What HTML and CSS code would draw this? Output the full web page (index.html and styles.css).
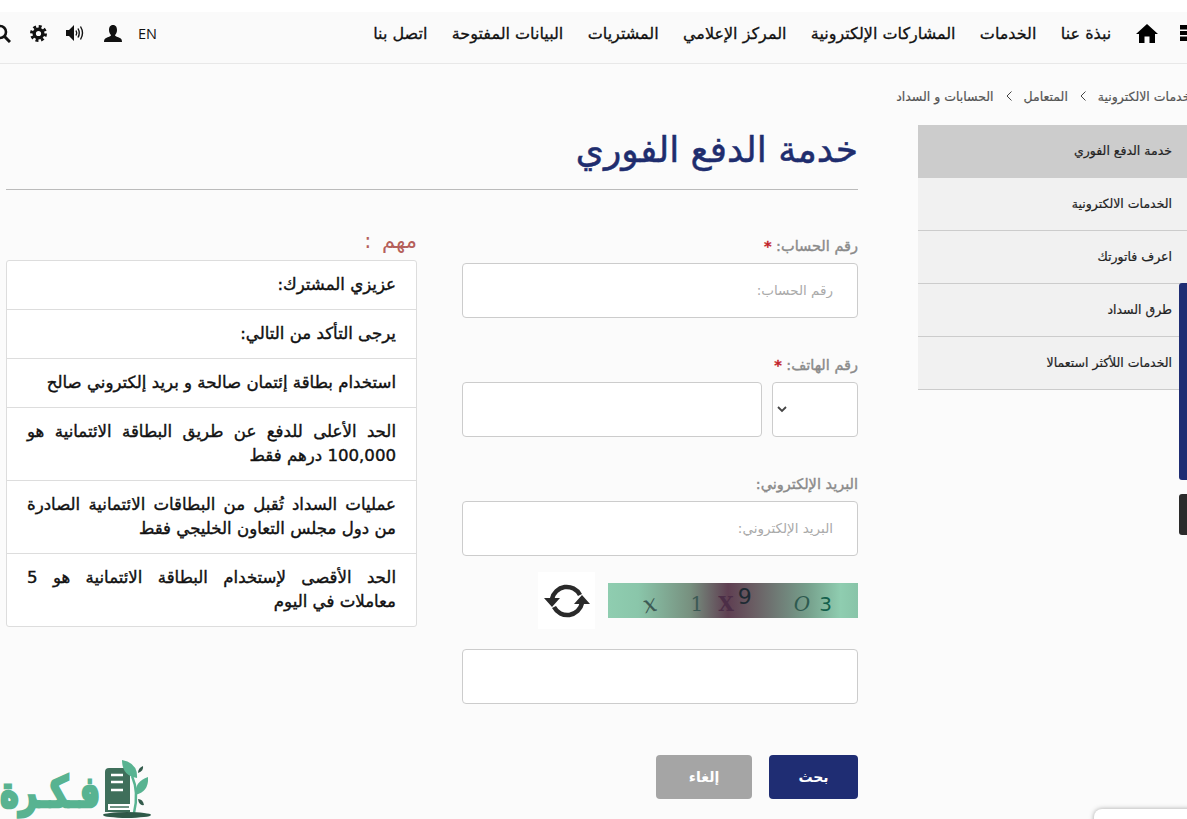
FILE: index.html
```html
<!DOCTYPE html>
<html lang="ar" dir="rtl">
<head>
  <meta charset="UTF-8">
  <meta name="viewport" content="width=device-width, initial-scale=1.0">
  <title>خدمة الدفع الفوري</title>
  <link rel="stylesheet" href="styles.css">
</head>
<body>

<!-- Top Bar -->
<header class="top-bar">
  <nav class="main-nav">
    <svg class="apps-icon" width="7" height="16" viewBox="0 0 7 16"><rect width="7" height="4.500"/><rect y="6" width="7" height="4"/><rect y="11.500" width="7" height="4.500"/></svg>
    <svg class="home-icon" width="22" height="19" viewBox="0 0 22 19"><path d="M11 0 L22 10 L19 10 L19 19 L13.500 19 L13.500 12.500 L8.500 12.500 L8.500 19 L3 19 L3 10 L0 10 Z"/></svg>
    <a>نبذة عنا</a>
    <a>الخدمات</a>
    <a>المشاركات الإلكترونية</a>
    <a>المركز الإعلامي</a>
    <a>المشتريات</a>
    <a>البيانات المفتوحة</a>
    <a>اتصل بنا</a>
  </nav>
  <div class="tools" dir="ltr">
    <svg width="19" height="19" viewBox="0 0 19 19"><circle cx="8" cy="8" r="6" fill="none" stroke="#111" stroke-width="2.600"/><path d="M12.500 12.500 L18 18" stroke="#111" stroke-width="3"/></svg>
    <svg width="17" height="17" viewBox="0 0 17 17"><circle cx="8.500" cy="8.500" r="4.300" fill="none" stroke="#111" stroke-width="3.400"/><circle cx="8.500" cy="8.500" r="7" fill="none" stroke="#111" stroke-width="3" stroke-dasharray="2.900 2.600"/></svg>
    <svg width="19" height="18" viewBox="0 0 19 18"><path d="M0 6 L3 6 L8 1 L8 17 L3 12 L0 12 Z"/><g fill="none" stroke="#111" stroke-width="1.400"><path d="M10 6.500 Q11.500 9 10 11.500"/><path d="M12 4.500 Q14.500 9 12 13.500"/><path d="M14.500 2.500 Q18.500 9 14.500 15.500"/></g></svg>
    <svg width="18" height="17" viewBox="0 0 18 17"><path d="M9 0 C12 0 13 2.500 13 5 C13 7.500 12 9 11 10 C11 11.500 14 12 16 13 C17.500 13.700 18 15 18 17 L0 17 C0 15 .5 13.700 2 13 C4 12 7 11.500 7 10 C6 9 5 7.500 5 5 C5 2.500 6 0 9 0 Z"/></svg>
    <span class="lang">EN</span>
  </div>
</header>

<!-- Breadcrumb -->
<div class="breadcrumb">
  <span>الخدمات الالكترونية</span>
  <svg width="6" height="10" viewBox="0 0 6 10"><path d="M5.500 .5 L1 5 L5.500 9.500" fill="none" stroke="#444"/></svg>
  <span>المتعامل</span>
  <svg width="6" height="10" viewBox="0 0 6 10"><path d="M5.500 .5 L1 5 L5.500 9.500" fill="none" stroke="#444"/></svg>
  <span>الحسابات و السداد</span>
</div>

<div class="page">
  <!-- Side Menu -->
  <aside class="side-menu">
    <a class="active">خدمة الدفع الفوري</a>
    <a>الخدمات الالكترونية</a>
    <a>اعرف فاتورتك</a>
    <a>طرق السداد</a>
    <a>الخدمات اللأكثر استعمالا</a>
  </aside>

  <main class="content">
    <h1 class="page-title">خدمة الدفع الفوري</h1>

    <div class="columns">
      <!-- Payment Form -->
      <form class="pay-form">
        <div class="field">
          <label>رقم الحساب: <b>*</b></label>
          <input type="text" placeholder="رقم الحساب:">
        </div>
        <div class="field">
          <label>رقم الهاتف: <b>*</b></label>
          <div class="phone-row">
            <div class="code-select">
              <svg width="10" height="7" viewBox="0 0 10 7"><path d="M1 1 L5 5 L9 1" fill="none" stroke="#444" stroke-width="1.800"/></svg>
            </div>
            <input type="text">
          </div>
        </div>
        <div class="field">
          <label>البريد الإلكتروني:</label>
          <input type="text" placeholder="البريد الإلكتروني:">
        </div>
        <div class="captcha-row">
          <div class="captcha" dir="ltr">
            <i class="c1">x</i><i class="c2">1</i><i class="c3">X</i><i class="c4">9</i><i class="c5">O</i><i class="c6">3</i>
          </div>
          <div class="refresh">
            <svg width="46" height="38" viewBox="0 0 46 38">
              <path d="M8 17 A15 15 0 0 1 36 13" fill="none" stroke="#2a2a2a" stroke-width="4.500"/>
              <path d="M38 21 A15 15 0 0 1 10 25" fill="none" stroke="#2a2a2a" stroke-width="4.500"/>
              <path d="M0 16 L16 16 L8 25 Z M46 22 L30 22 L38 13 Z" fill="#2a2a2a"/>
            </svg>
          </div>
        </div>
        <input class="captcha-input" type="text">
        <div class="form-actions">
          <button class="btn btn-search" type="button">بحث</button>
          <button class="btn btn-cancel" type="button">إلغاء</button>
        </div>
      </form>

      <!-- Notes -->
      <section class="notes">
        <h2>مهم :</h2>
        <ul>
          <li>عزيزي المشترك:</li>
          <li>يرجى التأكد من التالي:</li>
          <li>استخدام بطاقة إئتمان صالحة و بريد إلكتروني صالح</li>
          <li>الحد الأعلى للدفع عن طريق البطاقة الائتمانية هو 100,000 درهم فقط</li>
          <li>عمليات السداد تُقبل من البطاقات الائتمانية الصادرة من دول مجلس التعاون الخليجي فقط</li>
          <li>الحد الأقصى لإستخدام البطاقة الائتمانية هو 5 معاملات في اليوم</li>
        </ul>
      </section>
    </div>
  </main>
</div>

<!-- Floating side tabs -->
<div class="side-tab tab-blue"></div>
<div class="side-tab tab-dark"></div>

<!-- Watermark -->
<div class="watermark" dir="ltr">
  <span class="watermark-text" dir="rtl">فـكـرة</span>
  <svg width="48" height="62" viewBox="0 0 48 62">
    <path d="M2 14 Q2 10 6 10 L27 10 L27 54 L2 54 Z" fill="#3f6f5b"/>
    <path d="M5 52 L5 46 L27 46 L27 52 Z" fill="#fff"/>
    <path d="M7 49 H26" stroke="#3f6f5b" stroke-width="1.500"/>
    <path d="M8 17 H20 M8 24 H20 M8 32 H20" stroke="#fff" stroke-width="2.500"/>
    <path d="M19 2 Q35 5 34 20 Q19 18 19 2 Z" fill="#58b391"/>
    <path d="M32 37 Q32 23 45 19 Q46 34 32 37 Z" fill="#58b391"/>
    <path d="M35 15 Q35 10 40 8 Q41 13 35 15 Z M35 41 Q40 41 41 47 Q36 48 35 41 Z" fill="#345b4c"/>
    <path d="M29 18 Q36 34 31 55" fill="none" stroke="#58b391" stroke-width="2.500"/>
    <ellipse cx="24" cy="57" rx="24" ry="3" fill="#2f5a49"/>
  </svg>
</div>

<!-- Corner badge -->
<div class="corner-badge"></div>

</body>
</html>
```

FILE: styles.css
```css
html, body {
  margin: 0;
  height: 819px;
  overflow: hidden;
}

body {
  background-color: #fbfbfb;
  font-family: "DejaVu Sans", "Liberation Sans", sans-serif;
  color: #111;
  padding-top: 12px;
  box-sizing: border-box;
  position: relative;
}

/* Top Bar */
.top-bar {
  height: 52px;
  padding-bottom: 9px;
  box-sizing: border-box;
  display: flex;
  justify-content: space-between;
  align-items: center;
  background-color: #fafafa;
  border-bottom: 1px solid #e8e8e8;
  box-shadow: 0 -12px 0 #fff;
}

.main-nav {
  display: flex;
  align-items: center;
  gap: 24.400px;
  font-size: 16px;
  -webkit-text-stroke: 0.3px #111;
  white-space: nowrap;
}

.main-nav .home-icon {
  margin-right: -2px;
}

.tools {
  display: flex;
  align-items: center;
  gap: 19px;
  margin-left: -8px;
}

.tools svg {
  fill: #111;
}

.lang {
  margin-left: -3px;
  font-family: "Open Sans", sans-serif;
  font-size: 14.500px;
}

/* Breadcrumb */
.breadcrumb {
  display: flex;
  align-items: center;
  gap: 12px;
  margin: 24px -11px 0 0;
  font-size: 12.500px;
  -webkit-text-stroke: 0.2px #555;
  color: #555;
  white-space: nowrap;
  height: 16px;
}

/* Page columns */
.page {
  display: flex;
  margin-top: 21px;
}

.side-menu {
  width: 269px;
  flex-shrink: 0;
  margin-left: 60px;
}

.side-menu a {
  display: flex;
  align-items: center;
  height: 52px;
  box-sizing: border-box;
  height: 53px;
  padding: 0 15px 2px 0;
  background-color: #f1f1f1;
  border-bottom: 1px solid #ccc;
  font-size: 12.500px;
  -webkit-text-stroke: 0.2px #222;
  color: #222;
}

.side-menu a.active {
  background-color: #ccc;
}

.content {
  width: 852px;
}

.page-title {
  margin: 0;
  height: 64px;
  border-bottom: 1px solid #bbb;
  font-size: 36px;
  font-weight: normal;
  -webkit-text-stroke: 0.5px #1f2d6e;
  line-height: 50px;
  color: #1f2d6e;
}

.columns {
  display: flex;
  gap: 45px;
  margin-top: 47px;
}

/* Payment Form */
.pay-form {
  width: 396px;
}

.field {
  margin-bottom: 38px;
}

.field label {
  display: block;
  height: 17px;
  padding-top: 1px;
  margin-bottom: 8px;
  font-size: 14.500px;
  line-height: 17px;
  -webkit-text-stroke: 0.4px #8a8a8a;
  color: #8a8a8a;
}

.field label b {
  color: #c21f2a;
  -webkit-text-stroke: 0.3px #c21f2a;
}

input {
  display: block;
  width: 100%;
  height: 55px;
  box-sizing: border-box;
  padding: 0 24px 2px;
  background-color: #fff;
  border: 1px solid #ccc;
  border-radius: 4px;
  font-family: inherit;
  font-size: 13.500px;
}

input::placeholder {
  color: #aaa;
}

.phone-row {
  display: flex;
  gap: 10px;
}

.code-select {
  width: 86px;
  height: 55px;
  box-sizing: border-box;
  display: flex;
  align-items: center;
  justify-content: flex-end;
  padding-left: 4px;
  background-color: #fff;
  border: 1px solid #ccc;
  border-radius: 4px;
}

.phone-row input {
  width: 300px;
}

.captcha-row {
  display: flex;
  align-items: center;
  gap: 13px;
  height: 57px;
  margin-top: -22px;
}

.captcha {
  width: 250px;
  height: 35px;
  display: flex;
  align-items: flex-end;
  background: linear-gradient(90deg, #8fcdb0 0%, #8ac6aa 12%, #77907f 33%, #5f3f52 48%, #6a5d63 58%, #76a08c 80%, #8fcdb0 93%, #88c4a8 100%);
  font-family: "DejaVu Serif", serif;
  font-size: 20px;
  line-height: 28px;
}

.captcha i {
  font-style: normal;
  color: #3c5a55;
}

.captcha .c1 { margin-left: 35px; font-size: 24px; font-style: italic; transform: rotate(-15deg); }
.captcha .c2 { margin-left: 34px; }
.captcha .c3 { margin-left: 15px; color: #4c2e47; font-weight: bold; }
.captcha .c4 { margin-bottom: 7px; margin-left: 4px; font-size: 22px; color: #1d2a33; font-family: "DejaVu Sans", sans-serif; }
.captcha .c5 { margin-left: 42px; font-style: italic; color: #2f5a50; }
.captcha .c6 { margin-left: 9px; color: #14604c; font-family: "DejaVu Sans", sans-serif; }

.refresh {
  width: 57px;
  height: 57px;
  display: flex;
  align-items: center;
  justify-content: center;
  background-color: #fff;
}

.captcha-input {
  margin-top: 20px;
}

.form-actions {
  display: flex;
  gap: 17px;
  margin-top: 51px;
}

.btn {
  height: 44px;
  border: none;
  border-radius: 4px;
  color: #fff;
  font-family: inherit;
  font-size: 14px;
  font-weight: bold;
  cursor: pointer;
}

.btn-search {
  width: 89px;
  background-color: #1f2d73;
}

.btn-cancel {
  width: 96px;
  background-color: #a5a5a5;
}

/* Notes */
.notes {
  width: 411px;
}

.notes h2 {
  margin: -7px 0 0;
  height: 30px;
  font-size: 21px;
  font-weight: normal;
  word-spacing: 4px;
  line-height: 22px;
  color: #b5605a;
}

.notes ul {
  list-style-type: none;
  margin: 0;
  padding: 0;
  background-color: #fff;
  border: 1px solid #ddd;
  border-radius: 3px;
}

.notes li {
  padding: 12px 20px;
  border-bottom: 1px solid #ddd;
  font-size: 16.600px;
  -webkit-text-stroke: 0.4px #111;
  line-height: 24px;
  text-align: justify;
}

.notes li:last-child {
  border-bottom: none;
}

/* Floating bits */
.side-tab {
  position: absolute;
  right: 0;
  width: 8px;
  border-radius: 3px 0 0 3px;
}

.tab-blue {
  top: 283px;
  height: 197px;
  background-color: #1f2d73;
}

.tab-dark {
  top: 494px;
  height: 41px;
  background-color: #2b2b2b;
}

.watermark {
  position: absolute;
  left: 0;
  top: 758px;
  display: flex;
  align-items: flex-end;
  gap: 3px;
}

.watermark-text {
  font-size: 32px;
  font-weight: bold;
  -webkit-text-stroke: 2px #58b391;
  line-height: 56px;
  color: #58b391;
  white-space: nowrap;
  transform: scaleY(1.350);
}

.corner-badge {
  position: absolute;
  left: 1094px;
  top: 809px;
  width: 110px;
  height: 40px;
  background-color: #fff;
  border-radius: 8px;
  box-shadow: 0 0 5px rgba(0, 0, 0, 0.35);
}
```
